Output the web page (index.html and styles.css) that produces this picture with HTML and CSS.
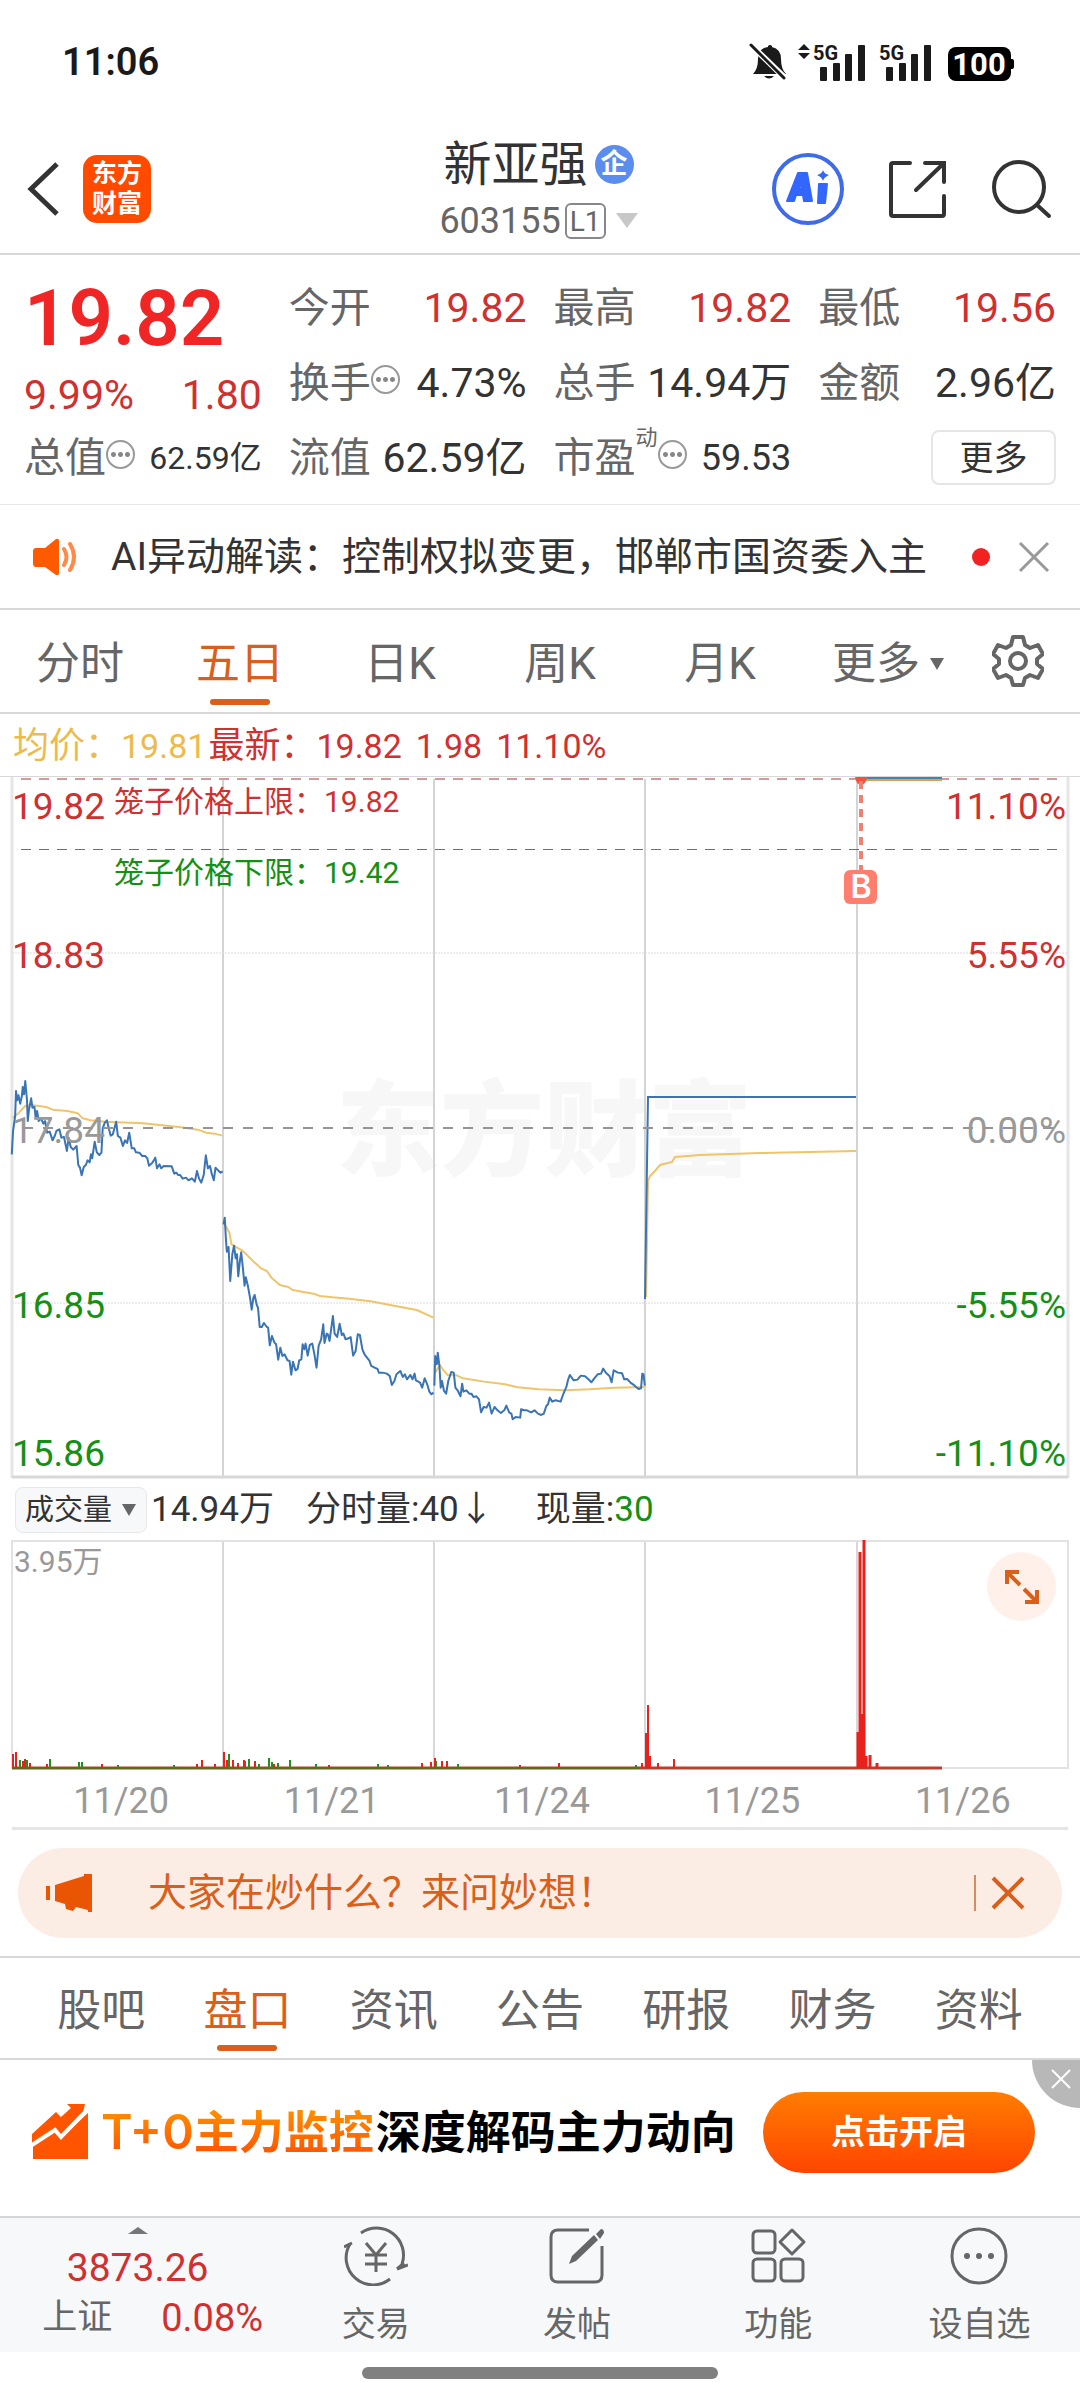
FILE: index.html
```html
<!DOCTYPE html>
<html lang="zh-CN">
<head>
<meta charset="utf-8">
<meta name="viewport" content="width=device-width, initial-scale=1">
<title>新亚强 603155</title>
<link rel="stylesheet" href="styles.css">
</head>
<body>
<div class="status">
  <time class="clock">11:06</time>
  <svg class="status-icons" viewBox="0 0 264 40" aria-hidden="true">
    <g fill="#1a1a1a">
      <path d="M5 32q5-5 5-15q0-11 10-12v-1q2-2 4 0v1q9 2 9 12q0 10 5 15zM16 34h10q-5 5-10 0z"/>
      <path d="M3 3L37 36" stroke="#fff" stroke-width="6"/>
      <path d="M3 3L36 36" stroke="#1a1a1a" stroke-width="3" stroke-linecap="round"/>
      <path d="M50 8l6-6 6 6zM50 11h12l-6 6z"/>
      <rect x="72" y="25" width="7" height="14" rx="1"/><rect x="85" y="21" width="7" height="18" rx="1"/><rect x="97" y="12" width="7" height="27" rx="1"/><rect x="110" y="3" width="7" height="36" rx="1"/>
      <rect x="138" y="25" width="7" height="14" rx="1"/><rect x="151" y="21" width="7" height="18" rx="1"/><rect x="163" y="12" width="7" height="27" rx="1"/><rect x="176" y="3" width="7" height="36" rx="1"/>
    </g>
    <rect x="200" y="5" width="63" height="34" rx="8"/><rect x="260" y="17" width="6" height="10" rx="2"/>
    <text class="net" x="65" y="18">5G</text>
    <text class="net" x="131" y="18">5G</text>
    <text class="battery" x="231" y="33">100</text>
  </svg>
</div>

<header class="header">
  <div class="head-left">
    <button class="icon-btn" aria-label="返回"><svg width="36" height="60" viewBox="0 0 36 60"><path d="M32 5L6 30l26 25" fill="none" stroke="#333" stroke-width="5"/></svg></button>
    <a class="brand" href="#">东方<br>财富</a>
  </div>
  <div class="head-title">
    <h1 class="name">新亚强<span class="corp">企</span></h1>
    <button class="code">603155<span class="level">L1</span><span class="caret-lg"></span></button>
  </div>
  <div class="head-right">
    <button class="icon-btn" aria-label="Ai"><svg width="72" height="72" viewBox="0 0 72 72"><circle cx="36" cy="36" r="34" fill="none" stroke="#3f6be8" stroke-width="4"/><g fill="#3366ff" stroke="#3366ff" stroke-width="2" stroke-linejoin="round"><path fill-rule="evenodd" d="M15 48L26 20h9l5 28h-8l-1-6h-7l-2 6zM27 36h3l-1-7z"/><path d="M47 31h8l-2 19h-7z"/><path stroke="none" d="M51 17q1 4 6 5q-5 2-6 6q-1-4-6-6q5-1 6-5z"/></g></svg></button>
    <button class="icon-btn" aria-label="分享"><svg width="60" height="60" viewBox="0 0 60 60"><path d="M22 4H5q-2 0-2 2v49q0 2 2 2h49q2 0 2-2V37M37 4h19v19M55 5L28 31" fill="none" stroke="#333" stroke-width="4" stroke-linecap="round"/></svg></button>
    <button class="icon-btn" aria-label="搜索"><svg width="60" height="60" viewBox="0 0 60 60"><circle cx="27" cy="28" r="25" fill="none" stroke="#333" stroke-width="4"/><path d="M45 46l12 11" stroke="#333" stroke-width="4" stroke-linecap="round"/></svg></button>
  </div>
</header>

<main>
<section class="quote">
  <div class="price">
    <strong class="last">19.82</strong>
    <p class="change"><span>9.99%</span><span>1.80</span></p>
  </div>
  <p class="cell"><span class="label">今开</span><span class="up">19.82</span></p>
  <p class="cell"><span class="label">最高</span><span class="up">19.82</span></p>
  <p class="cell"><span class="label">最低</span><span class="up">19.56</span></p>
  <p class="cell"><span class="label">换手<i class="dots"></i></span><span>4.73%</span></p>
  <p class="cell"><span class="label">总手</span><span>14.94万</span></p>
  <p class="cell"><span class="label">金额</span><span>2.96亿</span></p>
  <p class="cell"><span class="label">总值<i class="dots"></i></span><span class="small">62.59亿</span></p>
  <p class="cell"><span class="label">流值</span><span>62.59亿</span></p>
  <p class="cell"><span class="label">市盈<sup class="sup">动</sup><i class="dots"></i></span><span class="mid">59.53</span></p>
  <p class="cell cell-end"><button class="more">更多</button></p>
</section>

<section class="notice">
  <svg width="48" height="40" viewBox="0 0 48 40" aria-hidden="true"><path d="M3 11h10L24 2q3-1 3 2v32q0 3-3 2L13 30H3q-2-1-2-3V14q0-2 2-3z" fill="#ff5a00"/><path d="M32 12q5 8 0 16M38 7q8 13 0 26" fill="none" stroke="#ff8a4a" stroke-width="4" stroke-linecap="round"/></svg>
  <a class="notice-text" href="#">AI异动解读：控制权拟变更，邯郸市国资委入主</a>
  <span class="red-dot"></span>
  <button class="icon-btn" aria-label="关闭"><svg width="32" height="32" viewBox="0 0 32 32"><path d="M2 2l28 28M30 2L2 30" stroke="#999" stroke-width="3"/></svg></button>
</section>

<nav class="periods">
  <a class="tab" href="#">分时</a>
  <a class="tab active" href="#">五日</a>
  <a class="tab" href="#">日K</a>
  <a class="tab" href="#">周K</a>
  <a class="tab" href="#">月K</a>
  <a class="tab" href="#">更多<span class="caret"></span></a>
  <button class="icon-btn gear" aria-label="设置"><svg width="52" height="54" viewBox="0 0 52 54"><path d="M21 3h10l2 8 5 3 8-3 5 9-6 5v5l6 5-5 9-8-3-5 3-2 7H21l-2-7-5-3-8 3-5-9 6-5v-5l-6-5 5-9 8 3 5-3z" fill="none" stroke="#666" stroke-width="4" stroke-linejoin="round"/><circle cx="26" cy="27" r="8" fill="none" stroke="#666" stroke-width="4"/></svg></button>
</nav>

<section class="legend">
  <p class="avg">均价：<span class="num">19.81</span></p>
  <p class="new">最新：<span class="num">19.82</span></p>
  <p class="new num">1.98</p>
  <p class="new num">11.10%</p>
</section>

<svg class="chart" viewBox="0 0 1080 702" role="img" aria-label="五日分时走势">
  <text class="watermark" x="336" y="391">东方财富</text>
  <path d="M223 2V700M434 2V700M645 2V700M857 2V700" stroke="#d4d4d4" stroke-width="2"/>
  <path d="M12 0V701M1068 0V701" stroke="#e6e6e6" stroke-width="3"/>
  <path d="M12 700H1068" stroke="#d8d8d8" stroke-width="3"/>
  <path d="M12 176H1068M12 526H1068" stroke="#dcdcdc" stroke-dasharray="2 1"/>
  <path d="M21 2H1060" stroke="#d49a9a" stroke-width="2" stroke-dasharray="10 8"/>
  <path d="M21 72H1060" stroke="#37963a" stroke-width="1" stroke-dasharray="10 8" shape-rendering="crispEdges"/>
  <g fill="none" stroke-linejoin="round" transform="translate(0 264) scale(.4209 .3333)">
    <g stroke="#f0c468" stroke-width="2">
      <path vector-effect="non-scaling-stroke" d="M30 230L45 215 60 195 75 192 110 198 125 206 160 210 185 217 196 232 215 238 250 242 340 247 430 259 470 266 490 275 510 278 528 284"/>
      <path vector-effect="non-scaling-stroke" d="M532 545L545 575 550 610 575 628 607 667 620 682 634 690 645 710 665 732 685 738 695 747 745 758 760 765 790 769 830 773 880 781 930 793 990 807 1030 830"/>
      <path vector-effect="non-scaling-stroke" d="M1034 995L1045 972 1052 985 1063 1002 1085 1003 1100 1012 1150 1022 1200 1030 1230 1039 1280 1045 1340 1048 1400 1045 1460 1040 1532 1038"/>
    </g>
    <g stroke="#3a74b5" stroke-width="2">
      <path vector-effect="non-scaling-stroke" d="M28 340L31 270 36 225 38 150 41 178 44 163 48 188 52 165 54 138 57 160 60 120 64 175 66 240 69 205 74 172 77 200 82 198 85 232 88 210 92 240 97 232 103 248 107 240 112 275 118 272 125 298 130 285 134 270 141 265 146 290 152 288 159 330 163 290 168 318 174 326 182 315 186 372 190 380 194 403 199 378 204 372 208 358 213 364 216 340 219 352 225 302 230 334 236 342 241 335 244 262 249 245 254 238 259 265 263 284 268 280 276 242 280 285 286 290 292 315 297 298 302 306 307 275 313 322 319 322 323 334 331 335 338 345 345 345 350 352 354 374 362 365 369 350 373 382 379 370 383 382 389 375 408 376 414 398 419 395 423 402 428 402 434 413 442 410 448 418 456 412 463 422 468 390 473 413 478 425 484 402 489 343 494 382 499 375 503 398 508 418 512 380 518 388 524 395 529 391"/>
      <path vector-effect="non-scaling-stroke" d="M531 550L534 530 537 600 539 632 543 618 547 720 552 640 556 614 560 652 563 640 566 706 570 660 573 634 577 680 581 734 584 709 589 735 594 770 598 806 602 770 605 762 610 792 613 800 617 858 622 858 627 846 634 858 637 860 641 913 646 885 652 905 656 910 661 956 666 920 671 945 676 940 683 958 688 960 692 1001 696 962 702 988 707 984 711 958 716 955 719 910 723 925 726 908 731 944 736 912 742 908 747 940 752 980 757 915 763 895 768 850 771 906 776 878 779 880 783 900 791 825 795 878 801 888 807 848 812 882 816 878 821 895 828 892 833 888 839 944 845 930 850 880 855 882 861 925 866 940 872 950 878 960 882 975 890 980 897 984 900 995 909 995 919 998 926 1005 931 1032 937 1020 942 1000 951 990 957 1008 962 1000 967 1015 975 1002 980 1015 985 998 988 1018 998 1025 1003 1040 1009 1012 1015 1030 1020 1052 1025 1060 1030 1055"/>
      <path vector-effect="non-scaling-stroke" d="M1032 1034L1034 945 1038 970 1040 935 1044 975 1047 1040 1050 1020 1055 1050 1060 1058 1065 1020 1069 1005 1072 993 1078 995 1082 1040 1088 1050 1094 1066 1098 1028 1101 1052 1108 1048 1115 1058 1120 1058 1125 1068 1132 1066 1138 1075 1143 1114 1149 1098 1156 1100 1162 1085 1168 1118 1175 1098 1182 1108 1190 1116 1198 1108 1203 1094 1210 1115 1215 1118 1218 1135 1225 1128 1236 1130 1238 1105 1245 1108 1252 1108 1262 1114 1270 1108 1278 1118 1286 1122 1292 1118 1298 1095 1302 1090 1306 1070 1312 1082 1320 1078 1332 1082 1338 1060 1346 1036 1350 1015 1354 1002 1363 1018 1372 1016 1380 1004 1390 1006 1398 1015 1405 1024 1412 1012 1420 1000 1428 998 1433 983 1440 996 1448 1005 1453 1024 1458 988 1468 995 1478 997 1483 1015 1490 1014 1498 1025 1508 1034 1517 1044 1523 1042 1526 998 1529 1000 1532 1034"/>
    </g>
  </g>
  <path d="M646 520L648 404 650 399 655 394 660 388 672 385 675 380 700 378 760 376 856 374" fill="none" stroke="#f0c468" stroke-width="2"/>
  <path d="M645 522L648 320H856" fill="none" stroke="#3a74b5" stroke-width="2"/>
  <path d="M860 1H942" stroke="#4682a9" stroke-width="2"/>
  <path d="M860 3H942" stroke="#e0a054" stroke-width="2"/>
  <path d="M23 351H1056" stroke="#949494" stroke-width="2" stroke-dasharray="10 10"/>
  <path d="M855 0h12q-1 7-6 8q-5-1-6-8z" fill="#f4513c"/>
  <path d="M861 4V96" stroke="#f08070" stroke-width="4" stroke-dasharray="8 6"/>
  <rect x="844" y="93" width="33" height="34" rx="6" fill="#ff7f6e"/>
  <text class="pin" x="861" y="121">B</text>
  <g class="axis">
    <text class="t-up" x="12" y="42">19.82</text><text class="t-up" x="12" y="191">18.83</text><text class="t-flat" x="12" y="366">17.84</text><text class="t-down" x="12" y="541">16.85</text><text class="t-down" x="12" y="689">15.86</text>
  </g>
  <g class="axis axis-end">
    <text class="t-up" x="1066" y="42">11.10%</text><text class="t-up" x="1066" y="191">5.55%</text><text class="t-flat" x="1066" y="366">0.00%</text><text class="t-down" x="1066" y="541">-5.55%</text><text class="t-down" x="1066" y="689">-11.10%</text>
  </g>
  <text class="cage t-up" x="114" y="35">笼子价格上限：19.82</text>
  <text class="cage t-down" x="114" y="106">笼子价格下限：19.42</text>
</svg>

<section class="vol-bar">
  <button class="vol-pick">成交量<span class="caret"></span></button>
  <span class="vol-total">14.94万</span>
  <span class="vol-minute">分时量:40↓</span>
  <span>现量:<b class="down">30</b></span>
</section>

<div class="volume">
  <svg class="chart" viewBox="0 0 1080 230" role="img" aria-label="成交量">
    <path d="M223 0V228M434 0V228M645 0V228M857 0V228" stroke="#d8d8d8" stroke-width="2"/>
    <path d="M12 1H1068V228H12z" fill="none" stroke="#e2e2e2" stroke-width="2"/>
    <path d="M12 228H942" stroke="#b84030" stroke-width="3"/>
    <path d="M12 228H640" stroke="#5c6a1c" stroke-width="2"/>
    <g fill="none" stroke-width="2">
      <path stroke="#22901f" d="M20 228v-8M27 228v-8M50 228v-9M79 228v-6M82 228v-6M118 228v-3M174 228v-3M229 228v-14M245 228v-7M249 228v-9M259 228v-4M269 228v-10M272 228v-6M278 228v-5M290 228v-8M316 228v-4M378 228v-4M388 228v-3M422 228v-4M436 228v-7M458 228v-4M636 228v-3"/>
      <path stroke="#e8211d" d="M13 228v-14M16 228v-16M23 228v-7M25 228v-9M30 228v-5M47 228v-4M102 228v-4M197 228v-4M202 228v-8M215 228v-4M224 228v-16M227 228v-8M233 228v-8M238 228v-5M244 228v-8M255 228v-7M274 228v-4M329 228v-3M422 228v-5M431 228v-6M435 228v-10M442 228v-7M447 228v-7M520 228v-3M559 228v-5M642 228v-5M646 228V193M648 228V165M650 228v-12M658 228v-5M674 228v-9"/>
      <path stroke="#e8211d" stroke-width="3" d="M858 228v-36M860 228V12M864 228V0M862 228V174M866 228v-12M870 228v-13M877 228v-5"/>
    </g>
    <text class="vol-max" x="14" y="32">3.95万</text>
  </svg>
  <button class="expand" aria-label="全屏"><svg width="40" height="40" viewBox="0 0 40 40"><path d="M5 17V5h12M5 5l13 13M23 35h12V23M35 35L22 22" fill="none" stroke="#d95f1a" stroke-width="4"/></svg></button>
</div>
<div class="dates"><span>11/20</span><span>11/21</span><span>11/24</span><span>11/25</span><span>11/26</span></div>

<section class="ask">
  <svg width="48" height="40" viewBox="0 0 48 40" aria-hidden="true"><path d="M2 13v14" stroke="#ea5504" stroke-width="4"/><path d="M9 12L38 3V1h8v38h-4v-2l-12-3-3 4-7-2-1-5-10-3z" fill="#ea5504"/></svg>
  <a class="ask-text" href="#">大家在炒什么？来问妙想！</a>
  <button class="icon-btn ask-close" aria-label="关闭"><svg width="36" height="36" viewBox="0 0 36 36"><path d="M3 3l30 30M33 3L3 33" stroke="#d95f1a" stroke-width="4"/></svg></button>
</section>

<nav class="sections">
  <a class="tab" href="#">股吧</a>
  <a class="tab active" href="#">盘口</a>
  <a class="tab" href="#">资讯</a>
  <a class="tab" href="#">公告</a>
  <a class="tab" href="#">研报</a>
  <a class="tab" href="#">财务</a>
  <a class="tab" href="#">资料</a>
</nav>

<section class="banner">
  <svg width="56" height="56" viewBox="0 0 56 56" aria-hidden="true"><path fill="#ff5500" d="M0 30L24 8l5 5L39 4 35 0H53L50 12 28 33l-5-7L0 41zM1 55V40L23 27l6 7L56 9v46z"/><path fill="none" stroke="#fff" stroke-width="4" d="M0 41L23 26l6 7L56 5"/></svg>
  <p class="banner-text"><span class="hot"><span class="hot-lead">T+0</span>主力监控</span>深度解码主力动向</p>
  <button class="cta">点击开启</button>
  <button class="banner-close" aria-label="关闭广告"><svg width="22" height="22" viewBox="0 0 22 22"><path d="M2 2l18 18M20 2L2 20" stroke="#fff" stroke-width="2"/></svg></button>
</section>
</main>

<footer>
  <nav class="dock">
    <a class="index" href="#">
      <span class="tri-up"></span>
      <span class="index-value">3873.26</span>
      <span class="index-row"><span>上证</span><span class="index-pct">0.08%</span></span>
    </a>
    <a class="dock-item" href="#"><svg width="64" height="60" viewBox="0 0 64 60"><g fill="none" stroke="#666" stroke-width="3"><path d="M17 7A27 27 0 0 1 58 38M58 38v4M46 53A27 27 0 0 1 6 18"/><path d="M0 21l8-4M60 37l-7 6M53 43l11-4"/><path d="M22 17l10 12 10-12M21 29h22M21 38h22M32 28v18"/></g></svg>交易</a>
    <a class="dock-item" href="#"><svg width="60" height="60" viewBox="0 0 60 60"><path d="M42 4H11q-7 0-7 7v38q0 7 7 7h37q7 0 7-7V20" fill="none" stroke="#666" stroke-width="3"/><path d="M49 8l5-5q3 0 3 4l-4 6zM22 38l3-8 22-21 4 5-22 21z" fill="#666"/></svg>发帖</a>
    <a class="dock-item" href="#"><svg width="60" height="60" viewBox="0 0 60 60"><g fill="none" stroke="#666" stroke-width="3"><rect x="5" y="5" width="22" height="22" rx="4"/><rect x="5" y="33" width="22" height="22" rx="4"/><rect x="33" y="33" width="22" height="22" rx="4"/><path stroke-linejoin="round" d="M44 4l12 12-12 12-12-12z"/></g></svg>功能</a>
    <a class="dock-item" href="#"><svg width="60" height="60" viewBox="0 0 60 60"><circle cx="30" cy="30" r="27" fill="none" stroke="#666" stroke-width="3"/><g fill="#666"><circle cx="18" cy="30" r="3"/><circle cx="30" cy="30" r="3"/><circle cx="42" cy="30" r="3"/></g></svg>设自选</a>
  </nav>
  <div class="home"></div>
</footer>
</body>
</html>
```
FILE: styles.css
```css
* { box-sizing: border-box; margin: 0; padding: 0; }
body { background: #fff; color: #333; font-family: Roboto, "Noto Sans CJK SC", sans-serif; font-size: 41px; line-height: 48px; }
a { color: inherit; text-decoration: none; }
button { border: 0; background: none; color: inherit; font: inherit; }
svg { display: block; flex: none; }
.icon-btn { display: flex; }

.status { display: flex; justify-content: space-between; align-items: center; height: 124px; padding: 0 68px 0 62px; }
.clock { color: #1a1a1a; font-size: 38px; font-weight: 600; }
.status-icons { width: 264px; height: 40px; overflow: visible; }
.net { font-size: 20px; font-weight: 700; fill: #1a1a1a; }
.battery { font-size: 31px; font-weight: 700; fill: #fff; text-anchor: middle; }

.header { display: grid; grid-template-columns: 1fr auto 1fr; align-items: center; height: 131px; padding: 0 28px 0 25px; border-bottom: 2px solid #d8d8d8; }
.head-left { display: flex; align-items: center; gap: 22px; }
.brand { width: 68px; height: 68px; padding-top: 4px; border-radius: 14px; background: #ff4a00; color: #fff; font-size: 25px; font-weight: 700; line-height: 30px; text-align: center; }
.head-title { display: flex; flex-direction: column; align-items: center; gap: 10px; padding-top: 2px; }
.name { display: flex; align-items: center; gap: 7px; font-size: 48px; font-weight: 400; line-height: 52px; }
.corp { width: 39px; height: 39px; border-radius: 50%; background: #5b8def; color: #fff; font-size: 27px; font-weight: 700; line-height: 38px; text-align: center; }
.code { display: flex; align-items: center; gap: 4px; color: #666; font-size: 36px; line-height: 40px; }
.level { height: 36px; padding: 0 3px; border: 2px solid #888; border-radius: 6px; font-size: 28px; line-height: 33px; }
.caret-lg { margin-left: 6px; border: 11px solid transparent; border-top: 15px solid #c8c8c8; border-bottom: 0; }
.head-right { display: flex; justify-content: flex-end; align-items: center; gap: 44px; }

.quote { display: grid; grid-template-columns: repeat(4, 1fr); grid-auto-rows: 75px; column-gap: 27px; padding: 15px 24px 9px; border-bottom: 1px solid #e8e8e8; }
.price { grid-row: span 2; color: #f02626; }
.last { display: block; font-size: 78px; font-weight: 600; line-height: 98px; }
.change { display: flex; justify-content: space-between; color: #d0302f; line-height: 54px; }
.cell { display: flex; justify-content: space-between; align-items: center; white-space: nowrap; }
.label { display: flex; align-items: center; color: #666; }
.up { color: #d0302f; }
.small { font-size: 32px; }
.mid { font-size: 36px; }
.sup { align-self: flex-start; margin-top: -8px; font-size: 22px; line-height: 24px; }
.dots { width: 29px; height: 29px; margin-bottom: 6px; border: 2px solid #999; border-radius: 50%; background: radial-gradient(circle, #888 2px, transparent 3px) center / 7px 7px repeat-x; background-origin: content-box; background-clip: content-box; padding: 0 2px; }
.cell-end { justify-content: flex-end; }
.more { width: 125px; height: 55px; border: 2px solid #e6e6e6; border-radius: 8px; font-size: 34px; }

.notice { display: flex; align-items: center; height: 105px; padding: 0 30px 0 32px; border-bottom: 2px solid #d8d8d8; }
.notice-text { flex: 1; margin-left: 31px; font-size: 39px; white-space: nowrap; }
.red-dot { width: 18px; height: 18px; margin-right: 28px; border-radius: 50%; background: #f22222; }

.periods, .sections { display: grid; align-items: stretch; height: 104px; border-bottom: 2px solid #d8d8d8; color: #666; }
.periods { grid-template-columns: repeat(5, 160fr) 176fr 104fr; }
.tab { position: relative; display: flex; justify-content: center; align-items: center; padding-top: 5px; font-size: 44px; white-space: nowrap; }
.active { color: #d95f1a; }
.active::after { content: ""; position: absolute; left: 50%; bottom: 7px; width: 60px; height: 6px; margin-left: -30px; border-radius: 3px; background: #d95f1a; }
.caret { margin-left: 10px; border: 7px solid transparent; border-top: 12px solid #666; border-bottom: 0; }
.gear { align-items: center; padding-left: 16px; }

.legend { display: flex; align-items: center; height: 63px; padding: 2px 0 0 13px; border-bottom: 1px solid #d8d8d8; font-size: 36px; white-space: nowrap; }
.num { font-size: 34px; }
.avg { color: #ecbb4e; margin-right: 2px; }
.new { color: #d0302f; margin-right: 14px; }

.chart { width: 100%; height: auto; }
.axis { font-size: 37px; }
.axis-end { text-anchor: end; }
.t-up { fill: #d0302f; }
.t-down { fill: #159015; }
.t-flat { fill: #999; }
.cage { font-size: 30px; }
.watermark { font-size: 104px; font-weight: 900; fill: #f7f7f7; }
.pin { font-family: Inter, sans-serif; font-size: 32px; font-weight: 600; fill: #fff; text-anchor: middle; }

.vol-bar { display: flex; align-items: center; height: 61px; padding-left: 15px; font-size: 35px; white-space: nowrap; }
.vol-pick { display: flex; align-items: center; width: 132px; height: 46px; padding-left: 9px; border: 1px solid #e6e8ea; border-radius: 8px; background: #f6f8fa; font-size: 29px; }
.vol-total { margin: 0 32px 0 4px; }
.vol-minute { margin-right: 42px; }
.down { color: #159015; font-weight: 400; }
.volume { position: relative; }
.vol-max { font-size: 30px; fill: #999; }
.expand { position: absolute; top: 12px; right: 24px; display: flex; justify-content: center; align-items: center; width: 69px; height: 69px; border-radius: 50%; background: #fff1ea; }
.dates { display: grid; grid-template-columns: repeat(5, 1fr); align-items: center; height: 60px; margin: 0 12px; padding: 4px 0 0 4px; border-bottom: 3px solid #e6e6e6; color: #999; font-size: 36px; text-align: center; }

.ask { display: flex; align-items: center; height: 90px; margin: 18px; padding: 0 36px 0 28px; border-radius: 45px; background: #fcede4; color: #d95f1a; }
.ask-text { flex: 1; margin-left: 54px; font-size: 39px; }
.ask-close { padding-left: 14px; border-left: 2px solid #d98a60; }
.sections { grid-template-columns: repeat(7, 1fr); padding: 0 28px; border-top: 2px solid #d8d8d8; }

.banner { position: relative; display: flex; align-items: center; height: 156px; padding: 0 45px 12px 32px; }
.banner-text { flex: 1; margin-left: 13px; color: #000; font-family: Inter, "Noto Sans CJK SC", sans-serif; font-size: 45px; font-weight: 700; white-space: nowrap; }
.hot { margin-right: 2px; background: linear-gradient(#ff9500, #ff4d00); background-clip: text; color: transparent; }
.hot-lead { font-size: 48px; font-weight: 600; }
.cta { width: 272px; height: 81px; border-radius: 41px; background: linear-gradient(#ff7d00, #ff4500); color: #fff; font-size: 34px; font-weight: 700; }
.banner-close { position: absolute; top: 0; right: 0; display: flex; width: 48px; height: 48px; padding: 8px 0 0 18px; border-radius: 0 0 0 48px; background: #b8b8b8; }

.dock { display: grid; grid-template-columns: 275fr repeat(4, 201fr); height: 136px; border-top: 2px solid #d4d6d9; background: #f6f8fa; color: #666; }
.index { display: flex; flex-direction: column; align-items: center; padding-top: 9px; }
.tri-up { border: 10px solid transparent; border-top: 0; border-bottom: 7px solid #777; }
.index-value { margin-top: 10px; color: #d0302f; font-size: 39px; }
.index-row { display: flex; align-items: center; gap: 49px; padding-left: 32px; margin-right: 2px; font-size: 35px; line-height: 52px; }
.index-pct { color: #d0302f; font-size: 38px; }
.dock-item { display: flex; flex-direction: column; align-items: center; gap: 14px; padding-top: 8px; font-size: 34px; line-height: 48px; }
.home { height: 48px; padding-top: 15px; }
.home::before { content: ""; display: block; width: 33%; height: 12px; margin: 0 auto; border-radius: 6px; background: #808080; }
```
